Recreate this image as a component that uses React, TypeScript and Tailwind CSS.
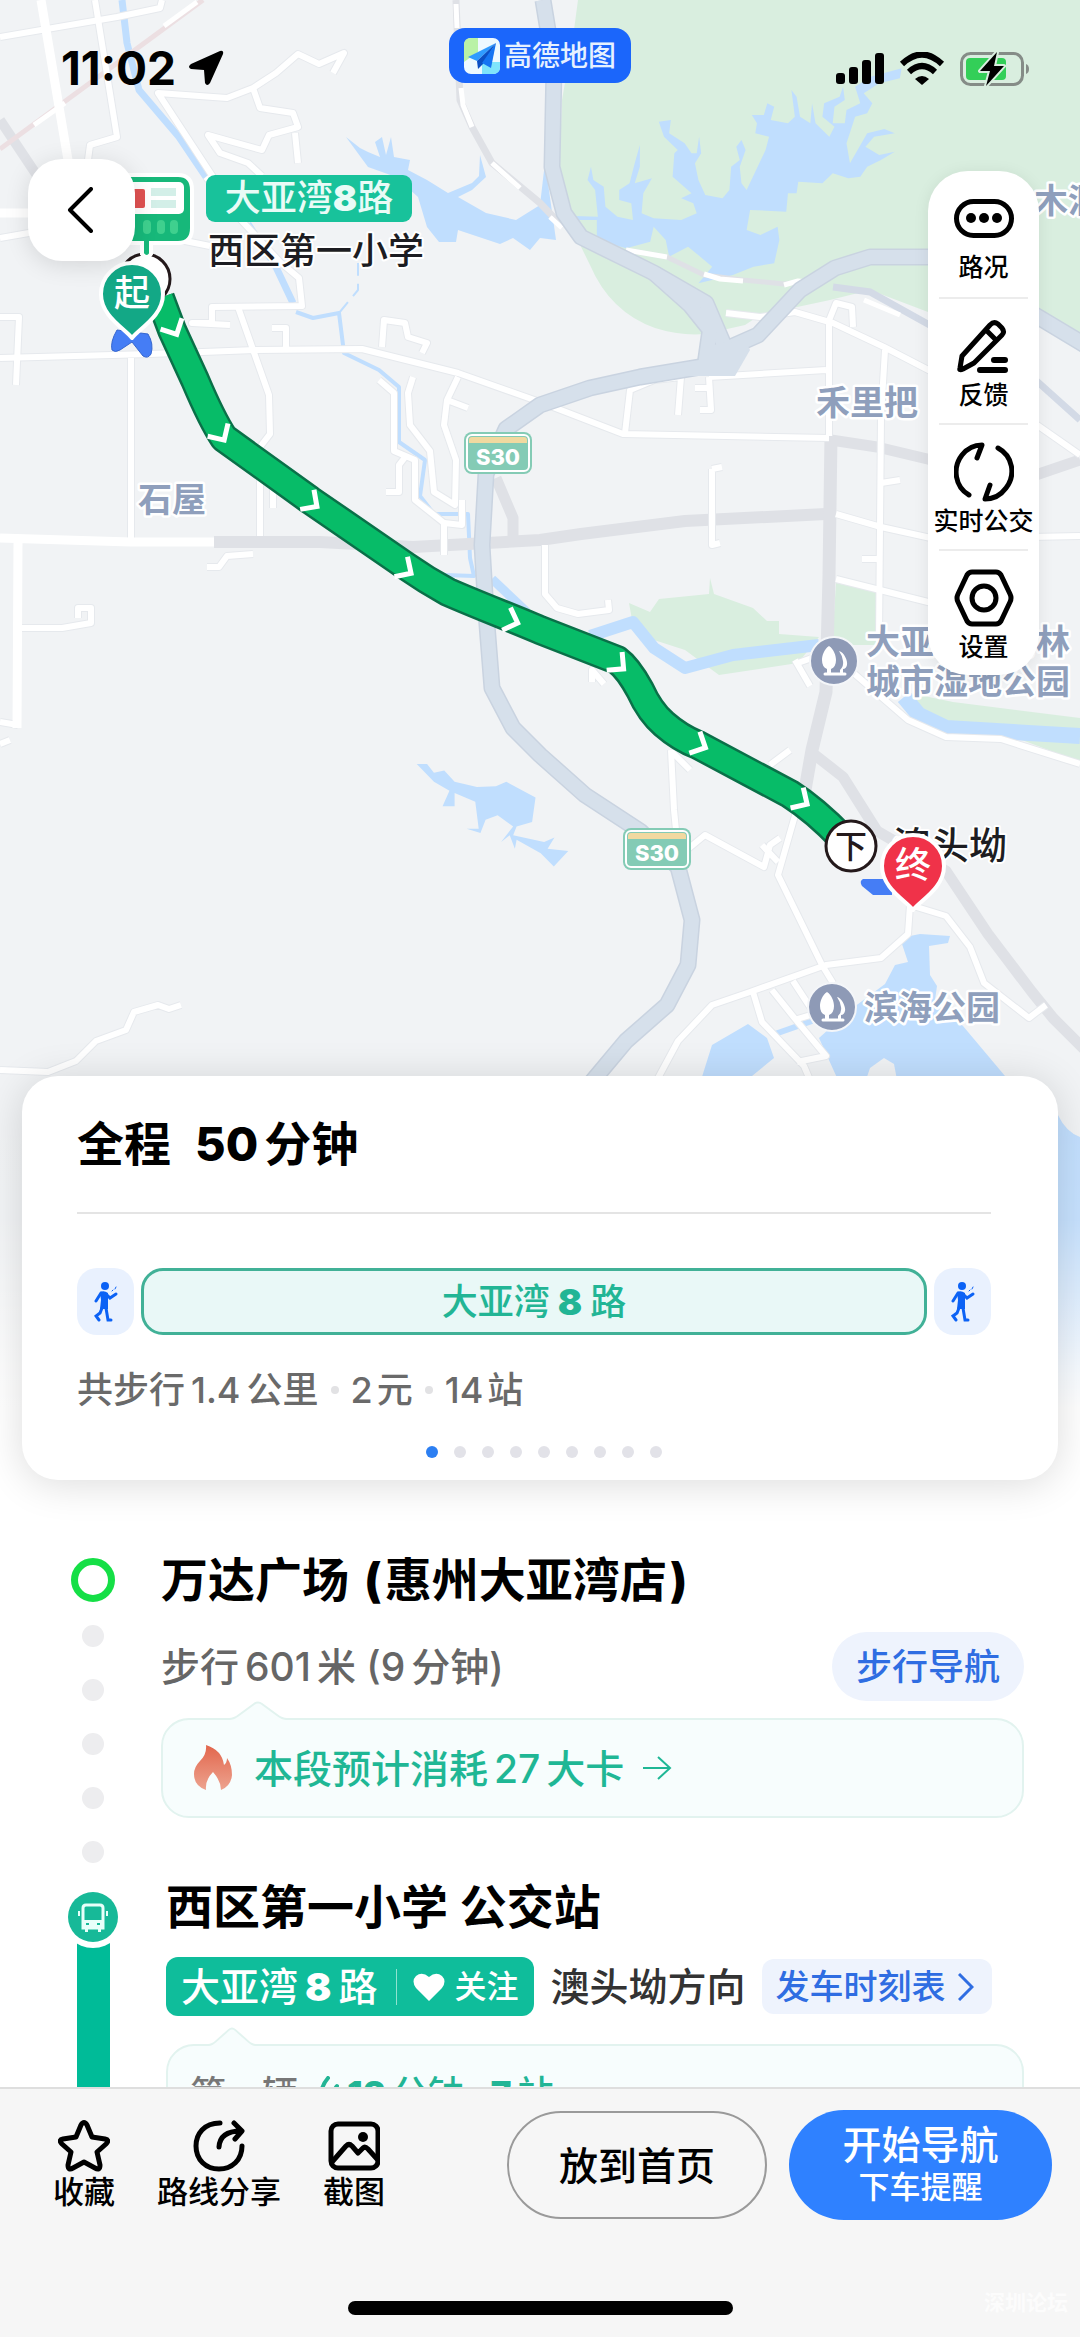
import { useState } from 'react';
import type { ReactNode } from 'react';

const MINOR_ROADS = [
  'M0 37L117 17L160 8L162 0',
  'M95 0L117 137L90 145L88 160',
  'M213 177L158 93L227 98L253 88L276 73L298 54L319 64L344 53L333 73',
  'M253 88L260 108L293 113L298 127L269 135L262 150L208 135L220 153L248 163L262 176M295 133L298 163',
  'M206 177L241 220L280 262L299 278L302 306L212 307L212 323L192 323L230 325',
  'M0 238L40 231M180 240L210 246',
  'M0 358L150 354L255 350L362 349L458 373L540 402L623 434L829 438',
  'M238 307L269 395L270 434L260 447L260 536M131 358L131 538',
  'M0 317L19 317L16 385',
  'M382 347L384 320L405 323L408 337L427 343L422 353M286 347L286 328L272 328',
  'M413 377L408 393L410 425L430 451L434 492L455 505L456 460L444 425L447 400L468 408M458 377L447 400',
  'M379 380L394 393L394 451L415 460L415 500L444 523L444 555M386 492L399 492L399 465L406 456',
  'M444 523L462 525L462 500',
  'M22 628L62 628L91 623L91 608L78 608L78 618',
  'M207 567L219 567L227 556L253 554M273 508L273 485',
  'M0 722L18 725M0 744L10 740',
  'M0 1070L48 1072L76 1061L96 1041L126 1030L134 1012L158 1005L169 1009L181 1005',
  'M726 313L760 317L795 312L833 323L884 347L940 376M828 323L836 303L852 307L853 327',
  'M829 320L829 436M885 350L881 416L879 639M709 377L826 370',
  'M681 377L678 415M681 377L654 380L630 390L625 433M709 377L711 410L700 410M695 388L712 388',
  'M679 290L700 306L712 316L718 345',
  'M836 514L881 527L940 540M836 579L940 605M881 483L900 480M862 559L880 559M1030 420L1080 455M1030 537L1080 536',
  'M545 545L545 594L557 608L578 614L609 610L608 600M712 469L712 545L720 543M712 469L722 467',
  'M850 670L908 720L946 737L1001 739L1080 764',
  'M671 750L674 810L676 830M688 849L705 835L764 867L770 845L780 838M762 845L778 862',
  'M798 805L778 875L822 965L833 983M672 752L690 770M770 765L790 750',
  'M657 1080L678 1041L712 1005L750 992L826 965L881 958L908 934L910 905L946 916L970 947L984 983L1029 1018L1046 1005',
  'M753 992L762 1022L804 1066L810 1080M772 990L796 1020L826 1056L797 1062M793 981L812 1010M794 1020L814 1014',
  'M592 682L592 670L604 684M795 660L810 686M795 664L812 658',
];

const ARROWS = [
  [174, 329, 63],
  [221, 435, 58],
  [312, 503, 35],
  [406, 570, 33],
  [512, 621, 20],
  [619, 665, 40],
  [700, 745, 26],
  [802, 801, 32],
];

function MapPin({ x, y, color, label }: { x: number; y: number; color: string; label: string }) {
  return (
    <g transform={`translate(${x} ${y})`}>
      <path
        d="M0 44C-8 34 -31 22 -31 0A31 31 0 0 1 31 0C31 22 8 34 0 44Z"
        fill={color}
        stroke="#fff"
        strokeWidth="4"
        strokeLinejoin="round"
      />
      <text y="12" textAnchor="middle" fontSize="36" fontWeight="500" fill="#fff">
        {label}
      </text>
    </g>
  );
}

function Shield({ x, y }: { x: number; y: number }) {
  return (
    <g transform={`translate(${x} ${y})`}>
      <rect width="68" height="42" rx="8" fill="#84cbb5" />
      <rect x="3" y="3" width="62" height="36" rx="5" fill="#84cbb5" stroke="#fff" strokeWidth="2" />
      <path d="M5 11V8Q5 5 8 5H60Q63 5 63 8V11Z" fill="#f1d9a0" />
      <text x="34" y="33" textAnchor="middle" fontSize="22" fontWeight="800" fill="#fff">
        S30
      </text>
    </g>
  );
}

function ParkIcon({ x, y }: { x: number; y: number }) {
  return (
    <g transform={`translate(${x} ${y})`}>
      <circle r="24" fill="#8e9ab6" stroke="#f4f6f9" strokeWidth="2" />
      <path
        d="M-5 -15C0 -12 2 -5 2 -1Q2 6 -3 8V12H-7V8Q-12 6 -12 -1C-12 -5 -10 -12 -5 -15Z"
        fill="#fff"
      />
      <path d="M5 -10C10 -9 14 0 13 4Q12 8 9 8V12H6V9Q10 5 9 0Q8 -6 5 -10Z" fill="#fff" />
      <path d="M-9 13H11" stroke="#fff" strokeWidth="3" strokeLinecap="round" />
    </g>
  );
}

function RouteMap() {
  const route =
    'M160 298L172 330L195 380Q212 420 224 438L310 500L406 566Q426 580 448 592C480 606 512 618 540 630L617 660Q628 668 640 690Q650 712 664 724Q680 738 698 745L790 794Q815 810 842 838';
  return (
    <svg
      viewBox="0 0 1080 1480"
      preserveAspectRatio="xMidYMin slice"
      className="pointer-events-none absolute inset-x-0 top-0 h-[1480px] w-full"
      role="img"
      aria-label="公交路线地图"
    >
      <defs>
        <linearGradient id="mapFade" x1="0" y1="0" x2="0" y2="1">
          <stop offset="0" stopColor="#fff" stopOpacity="0" />
          <stop offset="0.35" stopColor="#fff" stopOpacity="0.1" />
          <stop offset="0.72" stopColor="#fff" stopOpacity="0.85" />
          <stop offset="0.82" stopColor="#fff" />
          <stop offset="1" stopColor="#fff" />
        </linearGradient>
      </defs>
      <rect width="1080" height="1480" fill="#f1f3f5" />

      {/* parks */}
      <g fill="#d9eedf">
        <path d="M578 0L574 30L562 100L558 200L590 265Q610 312 655 328Q680 336 705 334L745 325L760 315L830 300L870 290L928 312L1000 310L1039 318L1080 345V0Z" />
        <path d="M629 603L650 612L659 599L709 594L710 578L714 594L753 608L767 621H779V634L819 637L798 663L719 675L685 650L654 640L633 625Z" />
        <path d="M836 583L876 592V645H832Z" />
        <path d="M905 692L953 702L1080 718V762L1022 740L946 730Z" />
      </g>

      {/* reservoirs and the bay */}
      <g fill="#c0defe">
        <path d="M346 137L360 148L368 152L380 157L375 142L382 137L386 155L391 137L394 157L410 160L408 170L427 180L448 193L472 183L479 176L480 155L486 177L472 190L458 197L486 213L516 220L540 205L545 162L556 240L540 238L530 250L513 238L500 244L458 230L456 242L439 242L427 227L418 197L396 177L368 167Z" />
        <path
          transform="translate(540 0) scale(0.3444 0.3333)"
          d="M165 720L165 660L100 660L100 648L168 650L160 570L138 540L148 500L155 540L185 560L190 620L225 650L270 660L265 610L230 600L230 570L260 550L275 490L290 435L290 500L275 550L325 535L300 580L295 640L330 655L410 660L455 640L445 610L410 595L440 580L385 530L390 460L400 450L360 410L345 365L380 360L375 400L420 430L440 460L455 460L462 410L468 460L450 490L460 540L480 585L530 595L550 570L555 500L580 480L570 440L585 420L597 450L580 500L585 550L600 570L655 450L665 410L625 400L630 370L615 345L650 345L660 310L680 320L670 360L720 370L740 350L730 270L745 290L755 350L785 370L790 310L800 370L840 410L855 380L820 350L825 310L870 290L880 260L885 300L855 320L850 370L885 370L890 330L930 310L915 260L960 230L1050 205L1045 235L985 250L940 280L965 310L950 340L915 350L890 430L900 490L950 400L1000 387L1030 400L970 410L945 440L985 465L1030 455L990 480L950 500L930 530L895 535L850 520L820 550L750 545L745 580L720 580L715 635L610 630L600 690L640 705L690 680L695 720L680 790L620 800L560 825L460 850L500 800L430 740L375 770L365 720L330 680L320 725L250 745Z"
        />
        <path
          transform="translate(0 380) scale(0.3444 0.4464)"
          d="M1210 860L1240 860L1260 880L1290 875L1320 900L1385 912L1440 910L1470 900L1555 935L1545 990L1500 1000L1490 1020L1580 1035L1610 1025L1590 1050L1650 1055L1608 1090L1570 1060L1500 1030L1495 1050L1480 1020L1455 1035L1490 1000L1445 975L1410 985L1395 1015L1355 1005L1390 1005L1380 945L1320 925L1320 955L1285 955L1305 920L1260 900Z"
        />
        <path d="M900 938L920 934L950 936L948 943L929 946L930 975L937 986L935 1000L963 1026L1005 1076L1058 1115Q1066 1132 1080 1137V1480H850L838 1080L819 1038L850 1010L885 984L895 965L908 962Z" />
        <path d="M701 1080L712 1045L748 1024L767 1038L774 1058L752 1076V1080Z" />
      </g>
      <path d="M866 1080L870 1068L884 1058L894 1064L897 1080Z" fill="#f1f3f5" />
      <g fill="none" stroke="#c0defe" strokeLinejoin="round">
        <path d="M122 0L127 43L139 90L179 137L206 177M248 224L275 265L293 303" strokeWidth="7" />
        <path d="M296 312L313 318L339 313L344 353L379 370L399 387L399 442L425 460L420 496L434 514L468 514L470 558L474 576L445 575" strokeWidth="4" />
        <path d="M339 313L358 290L358 263" strokeWidth="2" strokeDasharray="14 8" />
        <path d="M492 579L527 612" strokeWidth="9" />
        <path d="M775 1034L812 1021" strokeWidth="6" />
        <path d="M590 636L633 622L654 648L685 668L733 655L819 645" strokeWidth="12" />
        <path d="M904 697L919 715L946 728L1080 736" strokeWidth="16" />
      </g>

      {/* grey arterial roads */}
      <g fill="none" stroke="#dfe1e6" strokeLinejoin="round">
        <path d="M0 120L40 180" strokeWidth="10" />
        <path d="M214 542L320 542L413 547L540 540L581 534L685 521L826 514" strokeWidth="12" />
        <path d="M496 478L513 518L513 536" strokeWidth="11" />
        <path d="M831 436L829 576L826 692L812 750L805 790" strokeWidth="13" />
        <path d="M831 440L877 447L940 462M1030 477L1080 460" strokeWidth="11" />
        <path d="M815 755L843 777L877 831L946 871L988 934L1032 992L1053 1018L1090 1055" strokeWidth="11" />
        <path d="M456 0L460 100L472 127L492 163L540 203L563 227" strokeWidth="7" />
        <path d="M626 250L667 257L704 275L743 280L784 284L809 281" strokeWidth="5" />
      </g>
      <path d="M0 149L203 0" stroke="#ecdfe2" strokeWidth="5" />

      {[
        ['#e6e9ed', 8],
        ['#ffffff', 6],
      ].map(([color, width]) => (
        <g key={color} fill="none" stroke={color as string} strokeWidth={width} strokeLinejoin="round">
          {MINOR_ROADS.map((d) => (
            <path key={d} d={d} />
          ))}
        </g>
      ))}
      <g fill="none" stroke="#fff" strokeLinejoin="round">
        <path d="M41 0L68 160M0 213L30 213M0 538L131 542L214 542M18 541L17 728" strokeWidth="9" />
        <path d="M34 125L65 103M164 26L197 2" strokeWidth="5" />
        <path d="M456 4L457 28M461 88L463 105L472 127M492 163L520 188M550 217L562 228" strokeWidth="5" />
        <path d="M626 250L667 257M704 274L720 279L743 281M784 285L798 281L809 282" strokeWidth="5" />
      </g>

      {/* expressway */}
      {[
        ['#c9d3e0', 17],
        ['#d6e0eb', 14],
      ].map(([color, width]) => (
        <g key={color} fill="none" stroke={color as string} strokeWidth={width} strokeLinejoin="round">
          <path d="M543 0L554 67L552 167L564 213L581 237L654 273L706 303L724 345L712 365L640 377L590 388L540 405L506 429L486 474L482 545L486 612L492 688L513 728L540 755L585 795L640 831L678 867L692 920L688 965L667 1005L626 1041L585 1090" />
          <path d="M654 273L690 305L710 330L705 365" />
          <path d="M724 350L758 335L800 290L835 268L870 257L940 257M1030 312L1085 345" />
        </g>
      ))}
      <path d="M690 370L712 345L745 340L750 350L735 376H685Z" fill="#d6e0eb" />
      <path d="M833 287L870 292L935 328M1030 375L1080 420" fill="none" stroke="#d3dae6" strokeWidth="7" />
      <path d="M864 300L900 315" stroke="#fff" strokeWidth="5" />

      <Shield x={464} y={432} />
      <Shield x={623} y={828} />

      {/* place names */}
      <g
        fontSize="34"
        fontWeight="700"
        fill="#8f9fbc"
        stroke="#fff"
        strokeWidth="5"
        strokeLinejoin="round"
        paintOrder="stroke"
      >
        <text x="138" y="512">石屋</text>
        <text x="816" y="415">禾里把</text>
        <text x="1034" y="213">木洞</text>
        <text x="866" y="654">大亚湾红树林</text>
        <text x="866" y="694">城市湿地公园</text>
        <text x="864" y="1020">滨海公园</text>
      </g>
      <ParkIcon x={834} y={661} />
      <ParkIcon x={832} y={1007} />

      {/* bus route */}
      <g fill="none" strokeLinejoin="round">
        <path d={route} stroke="#0a7048" strokeWidth="30" />
        <path d={route} stroke="#07bc68" strokeWidth="25" />
      </g>
      {ARROWS.map(([x, y, angle]) => (
        <path
          key={x}
          d="M-6 -12L6 0L-6 12"
          transform={`translate(${x} ${y}) rotate(${angle})`}
          fill="none"
          stroke="#fff"
          strokeWidth="5"
        />
      ))}

      {/* boarding stop */}
      <circle cx="145" cy="279" r="25" fill="#fff" stroke="#24191b" strokeWidth="3" />
      <path
        d="M90 175H178Q192 175 192 190V228Q192 243 178 243H151V254Q147 260 142 254V243H90Z"
        fill="#17b87a"
        stroke="#fff"
        strokeWidth="4"
      />
      <rect x="95" y="182" width="89" height="32" rx="5" fill="#fff" />
      <rect x="120" y="189" width="25" height="19" rx="2" fill="#e05252" />
      <path d="M151 192H176M151 204H176" stroke="#d3efe8" strokeWidth="8" />
      <path d="M147 224V230M161 224V230M174 224V230" stroke="#3fd08e" strokeWidth="8" strokeLinecap="round" />
      <path
        d="M117 330Q110 342 112 350Q115 353 120 350L132 342L143 356Q148 359 151 354Q154 344 148 334Z"
        fill="#457df5"
        stroke="#3566cf"
        strokeWidth="1"
      />
      <MapPin x={132} y={294} color="#13a886" label="起" />
      <rect x="206" y="175" width="206" height="47" rx="9" fill="#18c29b" />
      <text x="309" y="211" textAnchor="middle" fontSize="36" fontWeight="500" fill="#e9fbf6">
        大亚湾<tspan fontWeight="900">8</tspan>路
      </text>
      <g stroke="#fff" strokeWidth="4" strokeLinejoin="round" paintOrder="stroke" fill="#1d1d22" fontWeight="500">
        <text x="208" y="264" fontSize="36">西区第一小学</text>
        <text x="893" y="859" fontSize="38">澳头坳</text>
      </g>

      {/* alighting stop */}
      <path d="M863 879H892V895H873L862 886Q859 881 863 879Z" fill="#457df5" />
      <circle cx="851" cy="846" r="25" fill="#fff" stroke="#24191b" strokeWidth="3" />
      <text x="851" y="858" textAnchor="middle" fontSize="32" fontWeight="500" fill="#24191b">
        下
      </text>
      <MapPin x={913} y={866} color="#f03249" label="终" />

      <rect y="1080" width="1080" height="400" fill="url(#mapFade)" />
    </svg>
  );
}

function StatusBar() {
  return (
    <div className="grid grid-cols-3 items-start px-[50px] pt-7">
      <div className="mt-[18px] ml-[11px] flex items-center gap-3 text-[46px] leading-[44px] font-bold">
        11:02
        <svg viewBox="0 0 36 36" className="size-9" fill="#000">
          <path d="M32 1L3 14Q-1 17 3 19L16 20L17 33Q19 37 22 33L35 4Q36 0 32 1Z" />
        </svg>
      </div>
      <div className="flex h-[55px] w-[182px] items-center justify-center gap-1 justify-self-center rounded-2xl bg-[#1b66fb] text-[28px] leading-none font-medium text-[#e6f1ff]">
        <svg viewBox="0 0 36 36" className="size-9">
          <rect width="36" height="36" rx="7" fill="#eef9ff" />
          <path d="M7 0H14V14L0 24V7Q0 0 7 0Z" fill="#b9f2a6" />
          <path d="M18 24L32 24H36V29Q36 36 29 36H18Z" fill="#7fe4fb" />
          <path d="M32 5L4 19L13 23Z" fill="#2f9bff" />
          <path d="M32 5L13 23L14 31L19 26Z" fill="#0b4fc4" />
          <path d="M32 5L18 25L27 30Z" fill="#1574f2" />
        </svg>
        高德地图
      </div>
      <div className="mt-[23px] flex items-center gap-[15px] justify-self-end">
        <svg viewBox="0 0 48 32" className="h-8 w-12">
          <rect x="0" y="20" width="9" height="11" rx="3" />
          <rect x="13" y="14" width="9" height="17" rx="3" />
          <rect x="26" y="7" width="9" height="24" rx="3" />
          <rect x="39" y="0" width="9" height="31" rx="3" />
        </svg>
        <svg viewBox="0 0 46 34" className="h-[34px] w-[46px]">
          <path d="M3 12Q23 -7 43 12" fill="none" stroke="#000" strokeWidth="6" />
          <path d="M10 20Q23 8 36 20" fill="none" stroke="#000" strokeWidth="6" />
          <path d="M23 33L16 27Q23 21 30 27Z" />
        </svg>
        <svg viewBox="0 0 70 36" className="h-9 w-[70px]">
          <rect x="1.5" y="2.5" width="61" height="31" rx="9" fill="none" stroke="#858c87" strokeWidth="3" />
          <rect x="6" y="7" width="40" height="22" rx="4" fill="#33cf58" />
          <path d="M66 13Q69 14 69 18Q69 22 66 23Z" fill="#858c87" />
          <path
            d="M37 1L20 20H30L26 35L44 15H34Z"
            stroke="#d9eedf"
            strokeWidth="4"
            strokeLinejoin="round"
            paintOrder="stroke"
          />
        </svg>
      </div>
    </div>
  );
}

const TOOLS: { label: string; icon: ReactNode }[] = [
  {
    label: '路况',
    icon: (
      <>
        <rect x="2.5" y="13.5" width="55" height="34" rx="17" />
        <g fill="currentColor" stroke="none">
          <circle cx="17" cy="30" r="5" />
          <circle cx="30" cy="30" r="5" />
          <circle cx="43" cy="30" r="5" />
        </g>
      </>
    ),
  },
  {
    label: '反馈',
    icon: (
      <>
        <path d="M6 52L8 40L36 9Q40 5 44 8L48 12Q51 16 48 19L20 47L9 53Q5 55 6 52ZM33 15L42 24" />
        <path d="M40 44H51M26 54H51" strokeWidth="6" />
      </>
    ),
  },
  {
    label: '实时公交',
    icon: (
      <>
        <path d="M15 53C1 45 -2 26 8 13Q16 3 28 3L23 16" />
        <path d="M44 6C59 14 62 33 52 46Q44 57 31 57L36 43" />
      </>
    ),
  },
  {
    label: '设置',
    icon: (
      <>
        <path d="M18 4H42Q45 4 47 7L56 26Q58 30 56 34L47 53Q45 56 42 56H18Q15 56 13 53L4 34Q2 30 4 26L13 7Q15 4 18 4Z" />
        <circle cx="30" cy="30" r="12" />
      </>
    ),
  },
];

function MapTools() {
  return (
    <nav className="mt-3 w-[111px] rounded-[40px] bg-white shadow-[0_2px_16px_rgba(0,0,0,0.08)]">
      {TOOLS.map((tool, i) => (
        <div key={tool.label} className="px-[11px]">
          <button
            className={`flex h-[126px] w-full flex-col items-center gap-1 pt-[17px] ${
              i > 0 ? 'border-t-2 border-[#ececec]' : ''
            }`}
          >
            <svg
              viewBox="0 0 60 60"
              className="size-[60px] shrink-0"
              fill="none"
              stroke="currentColor"
              strokeWidth="5"
              strokeLinecap="round"
              strokeLinejoin="round"
            >
              {tool.icon}
            </svg>
            <span className="text-[25px] leading-[30px] font-medium whitespace-nowrap">{tool.label}</span>
          </button>
        </div>
      ))}
    </nav>
  );
}

function WalkBox() {
  return (
    <div className="flex h-[67px] w-[57px] shrink-0 items-center justify-center rounded-[20px] bg-[#e9f1fe]">
      <svg viewBox="0 0 24 42" className="h-[42px] w-6" fill="none" stroke="#0c62f5" strokeLinecap="round">
        <circle cx="11" cy="5" r="4" fill="#0c62f5" stroke="none" />
        <path d="M6 11Q10 9 14 12L14 28H6L7 19Z" fill="#0c62f5" stroke="none" />
        <path d="M7 12L2 20M13 14L16 17L22 13" strokeWidth="3" />
        <path d="M8 27L6 32L2 35L5 39M12 27L14 39H17" strokeWidth="3" />
        <path d="M18 10L19 9M21 8L22 6" strokeWidth="1" />
      </svg>
    </div>
  );
}

function SummaryCard() {
  const [page, setPage] = useState(0);
  return (
    <section className="relative mx-[22px] h-[404px] rounded-[36px] bg-white pt-[38px] pr-[67px] pl-[55px] shadow-[0_4px_40px_rgba(0,0,0,0.14)]">
      <h1 className="border-b-2 border-[#e4e4e4] pb-[38px] text-[47px] leading-[60px] font-semibold">
        全程<span className="mr-[6px] ml-6 font-extrabold">50</span>分钟
      </h1>
      <div className="mt-[54px] flex gap-[7px]">
        <WalkBox />
        <div className="flex h-[67px] flex-1 items-center justify-center gap-2 rounded-[22px] border-[3px] border-[#41b197] bg-[#e9f8f7] text-[36px] leading-none font-medium text-[#22b595]">
          大亚湾<span className="font-black">8</span>路
        </div>
        <WalkBox />
      </div>
      <p className="mt-[33px] flex items-center gap-3 text-[36px] leading-[44px] font-medium text-[#6a6a6a]">
        <span>
          共步行<span className="mx-[6px]">1.4</span>公里
        </span>
        <i className="size-2 rounded-full bg-[#e2e2e4]" />
        <span>
          <span className="mr-1">2</span>元
        </span>
        <i className="size-2 rounded-full bg-[#e2e2e4]" />
        <span>
          <span className="mr-1">14</span>站
        </span>
      </p>
      <div className="mt-[34px] flex justify-center gap-4 pl-5">
        {Array.from({ length: 9 }, (_, i) => (
          <button
            key={i}
            aria-label={`方案${i + 1}`}
            onClick={() => setPage(i)}
            className={`size-3 rounded-full ${i === page ? 'bg-[#2c7ff2]' : 'bg-[#e2e2e8]'}`}
          />
        ))}
      </div>
    </section>
  );
}

function Callout({ tip, children }: { tip: 'wide' | 'narrow'; children: ReactNode }) {
  return (
    <div className="relative flex h-[100px] items-center rounded-[28px] border-2 border-[#e2f3ef] bg-[#f7fdfd]">
      <svg
        viewBox="0 0 58 20"
        preserveAspectRatio="none"
        className={`absolute -top-[19px] h-5 ${tip === 'wide' ? 'left-[66px] w-[58px]' : 'left-10 w-12'}`}
      >
        <path d="M0 19Q5 18 10 14L25 3Q29 0 33 3L48 14Q53 18 58 19V20H0Z" fill="#f7fdfd" />
        <path
          d="M0 18Q5 18 10 14L25 3Q29 0 33 3L48 14Q53 18 58 18"
          fill="none"
          stroke="#e2f3ef"
          strokeWidth="2"
        />
      </svg>
      {children}
    </div>
  );
}

function Itinerary() {
  return (
    <section className="relative min-h-0 flex-1 overflow-hidden pt-[62px] pr-14 pl-[68px]">
      {/* walking leg */}
      <div className="flex gap-[43px]">
        <div className="flex w-[50px] shrink-0 flex-col items-center pt-4">
          <span className="size-11 rounded-full border-[7px] border-[#15df46]" />
          <div className="mt-[23px] flex flex-col gap-8">
            {Array.from({ length: 5 }, (_, i) => (
              <span key={i} className="size-[22px] rounded-full bg-[#ededef]" />
            ))}
          </div>
        </div>
        <div className="flex-1">
          <h2 className="pt-[6px] text-[47px] leading-[64px] font-semibold">
            万达广场 <b className="mx-[3px] font-extrabold">(</b>惠州大亚湾店<b className="ml-[3px] font-extrabold">)</b>
          </h2>
          <div className="mt-5 flex items-center justify-between">
            <p className="text-[39px] leading-none font-medium text-[#666]">
              步行<span className="mx-[6px]">601</span>米 (9<span className="ml-[6px]">分钟</span>)
            </p>
            <button className="h-[69px] rounded-full bg-[#eef3fd] px-6 text-[36px] leading-none font-medium text-[#2f6de2]">
              步行导航
            </button>
          </div>
          <div className="mt-[17px]">
            <Callout tip="wide">
              <a href="#calories" className="flex items-center pl-[30px] text-[39px] leading-none font-medium text-[#1fb795]">
                <svg viewBox="0 0 40 46" className="mr-[21px] h-[46px] w-10">
                  <defs>
                    <linearGradient id="flame" x1="0" y1="0" x2="0" y2="1">
                      <stop offset="0" stopColor="#e2664c" />
                      <stop offset="1" stopColor="#eda38f" />
                    </linearGradient>
                  </defs>
                  <path
                    d="M13 0Q29 5 31 20Q34 18 34 13Q39 20 39 30Q38 41 28 45Q28 36 20 27Q12 35 13 45Q1 41 1 29Q1 22 7 16Q14 9 13 0Z"
                    fill="url(#flame)"
                  />
                </svg>
                本段预计消耗<span className="mx-[6px]">27</span>大卡
                <svg viewBox="0 0 30 26" className="ml-[18px] h-[26px] w-[30px]" fill="none" stroke="currentColor" strokeWidth="2">
                  <path d="M1 13H28M16 2L28 13L16 24" />
                </svg>
              </a>
            </Callout>
          </div>
        </div>
      </div>

      {/* bus leg */}
      <div className="flex gap-[48px]">
        <div className="flex w-[50px] shrink-0 flex-col items-center pt-[29px]">
          <span className="z-10 flex size-[50px] shrink-0 items-center justify-center rounded-full bg-[#17b998] ring-[6px] ring-white">
            <svg viewBox="0 0 30 30" className="size-[30px]" fill="none" stroke="#e8fffa" strokeWidth="3">
              <path d="M8 3H22Q25 3 25 6V26H5V6Q5 3 8 3Z" />
              <path d="M5 19H25V26H22V29H21V26H9V29H8V26H5Z" fill="#e8fffa" strokeWidth="2" />
              <path d="M1 9V14M29 9V14" strokeWidth="2" />
              <path d="M8 22H11M19 22H22" stroke="#17b998" strokeWidth="2" />
            </svg>
          </span>
          <span className="h-[200px] w-[33px] bg-[#00bb98]" />
        </div>
        <div className="min-w-0 flex-1">
          <h2 className="pt-[14px] text-[47px] leading-[60px] font-semibold">西区第一小学 公交站</h2>
          <div className="mt-5 flex items-center">
            <div className="flex h-[59px] items-center rounded-xl bg-[#0fbd9b] px-[15px] text-white">
              <span className="flex gap-[7px] text-[39px] leading-none font-medium">
                大亚湾<b className="font-black">8</b>路
              </span>
              <span className="mr-4 ml-[18px] h-9 w-px bg-[#8fe3d0]" />
              <button className="flex items-center gap-[10px] text-[32px] leading-none font-medium">
                <svg viewBox="0 0 32 28" className="h-7 w-8" fill="#fff">
                  <path d="M16 28L3 15Q-2 8 3 3Q9 -2 16 4Q23 -2 29 3Q34 8 29 15Z" />
                </svg>
                关注
              </button>
            </div>
            <span className="ml-[17px] text-[39px] leading-none font-medium whitespace-nowrap text-[#333]">澳头坳方向</span>
            <button className="ml-4 flex h-[55px] items-center gap-3 rounded-xl bg-[#eef3fd] pr-[18px] pl-[14px] text-[34px] leading-none font-medium whitespace-nowrap text-[#2f6de2]">
              发车时刻表
              <svg viewBox="0 0 16 28" className="h-7 w-4" fill="none" stroke="currentColor" strokeWidth="3">
                <path d="M1 1L14 14L1 27" />
              </svg>
            </button>
          </div>
          <div className="mt-7">
            <Callout tip="narrow">
              <p className="flex items-center pl-[22px] text-[36px] leading-none font-medium whitespace-nowrap text-[#777]">
                第一辆
                <svg viewBox="0 0 20 36" className="mr-2 ml-[21px] h-9 w-5" fill="none" stroke="#22b595" strokeWidth="4" strokeLinecap="round">
                  <path d="M9 2Q-3 16 6 34M18 10Q10 20 15 32" />
                </svg>
                <span className="flex items-center gap-[6px] text-[#22b595]">
                  <b className="font-extrabold">12</b>分钟 · <b className="font-extrabold">7</b>站
                </span>
              </p>
            </Callout>
          </div>
        </div>
      </div>
    </section>
  );
}

const ACTIONS: { label: string; icon: ReactNode }[] = [
  {
    label: '收藏',
    icon: (
      <path d="M23 5Q26 0 29 5L34 17L47 19Q52 20 48 24L39 32L42 45Q42 51 37 48L26 42L15 48Q10 51 10 45L13 32L4 24Q0 20 5 19L18 17Z" />
    ),
  },
  {
    label: '路线分享',
    icon: (
      <>
        <path d="M27 3C11 3 3 14 3 26C3 40 13 49 26 49C39 49 49 40 49 26" />
        <path d="M26 27Q27 11 48 11M41 3L49 11L42 19" />
      </>
    ),
  },
  {
    label: '截图',
    icon: (
      <>
        <rect x="3" y="4" width="47" height="44" rx="7" />
        <path d="M4 42L18 26Q21 23 24 26L30 33L35 28Q37 26 40 29L49 39" />
        <circle cx="35" cy="17" r="5" fill="currentColor" stroke="none" />
      </>
    ),
  },
];

function ActionBar() {
  return (
    <footer className="relative h-[250px] shrink-0 border-t-2 border-[#dedede] bg-[#f6f6f6]">
      <div className="flex items-start pr-7 pl-[53px]">
        <div className="flex gap-[42px] pt-[31px]">
          {ACTIONS.map((action) => (
            <button key={action.label} className="flex flex-col items-center text-[31px] leading-10 font-medium">
              <svg
                viewBox="0 0 52 52"
                className="size-[52px]"
                fill="none"
                stroke="currentColor"
                strokeWidth="5"
                strokeLinecap="round"
                strokeLinejoin="round"
              >
                {action.icon}
              </svg>
              {action.label}
            </button>
          ))}
        </div>
        <div className="ml-auto flex items-center gap-[22px] pt-[21px]">
          <button className="h-[108px] w-[260px] rounded-full border-2 border-[#9a9a9a] text-[39px] leading-none font-medium">
            放到首页
          </button>
          <button className="flex h-[110px] w-[263px] flex-col items-center justify-center rounded-full bg-[#2f81ff] text-[39px] leading-[44px] font-medium text-white">
            开始导航
            <span className="text-[31px] leading-10">下车提醒</span>
          </button>
        </div>
      </div>
      <span className="mx-auto mt-[81px] block h-[14px] w-[385px] rounded-full bg-black" />
      <span className="absolute right-3 bottom-6 text-[21px] leading-none font-bold text-[#fcfcfc]">深圳论坛</span>
    </footer>
  );
}

export default function App() {
  return (
    <main className="relative flex h-screen flex-col overflow-hidden bg-white font-['Inter','Noto_Sans_CJK_SC',sans-serif] text-black">
      <RouteMap />
      <div className="relative h-[1076px] shrink-0">
        <StatusBar />
        <div className="mt-[69px] flex items-start justify-between pr-[41px] pl-7">
          <button
            aria-label="返回"
            className="flex h-[102px] w-[107px] items-center justify-center rounded-[34px] bg-white shadow-[0_4px_24px_rgba(0,0,0,0.12)]"
          >
            <svg viewBox="0 0 26 46" className="mr-1 h-[46px] w-[26px]" fill="none" stroke="#000" strokeWidth="4" strokeLinecap="round" strokeLinejoin="round">
              <path d="M24 2L3 23L24 44" />
            </svg>
          </button>
          <MapTools />
        </div>
      </div>
      <SummaryCard />
      <Itinerary />
      <ActionBar />
    </main>
  );
}
